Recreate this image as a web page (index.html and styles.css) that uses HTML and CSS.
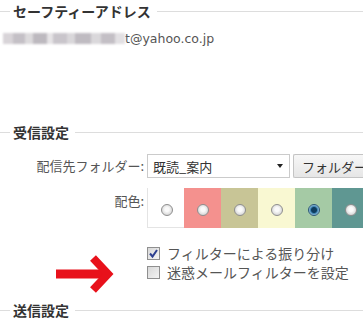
FILE: index.html
```html
<!DOCTYPE html>
<html>
  <head>
    <meta charset="utf-8"/>
    <title>受信設定</title>
    <link rel="stylesheet" href="styles.css">
  </head>
  <body>
    <div class="page">
      <div class="legend legend-safety"><span>セーフティーアドレス</span></div>
      <p class="email"><span class="masked"></span>t@yahoo.co.jp</p>

      <div class="legend legend-recv"><span>受信設定</span></div>
      <div class="form">
        <div class="label label-mid">配信先フォルダー:</div>
        <div class="folder-field">
          <div class="select"><span>既読_案内</span><span class="caret"></span></div>
          <button class="btn">フォルダー</button>
        </div>

        <div class="label label-top">配色:</div>
        <div class="swatches">
          <span class="swatch sw-white"><i class="radio"></i></span>
          <span class="swatch sw-pink"><i class="radio"></i></span>
          <span class="swatch sw-khaki"><i class="radio"></i></span>
          <span class="swatch sw-yellow"><i class="radio"></i></span>
          <span class="swatch sw-green"><i class="radio radio-on"></i></span>
          <span class="swatch sw-teal"><i class="radio"></i></span>
        </div>

        <div></div>
        <div class="checks">
          <div class="check-row">
            <span class="checkbox">
              <svg width="11" height="11" viewBox="0 0 11 11"><path d="M2 5.5 L4.5 8.5 L9 2" fill="none" stroke="#2d3f8f" stroke-width="2"/></svg>
            </span>
            フィルターによる振り分け
          </div>
          <div class="check-row">
            <span class="checkbox"></span>
            迷惑メールフィルターを設定
          </div>
        </div>
      </div>

      <svg class="arrow" width="64" height="44" viewBox="0 0 64 44">
        <line x1="2" y1="21" x2="52" y2="21" stroke="#e8111b" stroke-width="9"/>
        <polyline points="39,5 54,21 39,37" fill="none" stroke="#e8111b" stroke-width="8"/>
      </svg>

      <div class="legend legend-send"><span>送信設定</span></div>
    </div>
  </body>
</html>
```

FILE: styles.css
```css
* {
  margin: 0;
  padding: 0;
  box-sizing: border-box;
}

html {
  font-size: 13px;
  font-family: 'Noto Sans CJK JP', 'DejaVu Sans', sans-serif;
  color: #555;
}

body {
  width: 363px;
  height: 323px;
  overflow: hidden;
  background: #fff;
}

.page {
  position: relative;
}

.legend {
  display: flex;
  align-items: center;
  height: 20px;
  font-size: 14px;
  font-weight: bold;
  color: #333;
}

.legend::before,
.legend::after {
  content: '';
  height: 1px;
  background: #ddd;
}

.legend::before {
  width: 10px;
}

.legend::after {
  flex: 1;
}

.legend span {
  margin: 0 6px 0 3px;
  line-height: 20px;
}

.legend-safety {
  margin-top: 1px;
}

.email {
  margin: 8px 0 0 3px;
  line-height: 20px;
  font-family: 'DejaVu Sans', sans-serif;
  font-size: 12.5px;
  color: #555;
}

.masked {
  display: inline-block;
  width: 122px;
  height: 11px;
  vertical-align: -1px;
  background: linear-gradient(90deg,
    #d8d4d8 0 10px, #c4c0c6 10px 22px, #dcdadc 22px 30px, #bdb9bf 30px 44px,
    #e6e4e6 44px 50px, #c9c5cb 50px 64px, #d9d7da 64px 72px, #bfbbc1 72px 88px,
    #dad8db 88px 98px, #c3bfc5 98px 112px, #e2e0e3 112px 122px);
  filter: blur(1px);
}

.legend-recv {
  margin-top: 73px;
}

.form {
  display: grid;
  grid-template-columns: 147px 1fr;
  row-gap: 10px;
  margin-top: 12px;
}

.label {
  text-align: right;
  padding-right: 3px;
  line-height: 20px;
  white-space: nowrap;
}

.label-mid {
  align-self: center;
}

.label-top {
  align-self: start;
  padding-top: 3px;
}

.folder-field {
  display: flex;
  gap: 3px;
}

.select {
  display: flex;
  align-items: center;
  justify-content: space-between;
  flex: none;
  width: 143px;
  height: 24px;
  padding: 0 5px;
  border: 1px solid #cbcbcb;
  background: #fff;
  color: #333;
}

.caret {
  width: 0;
  height: 0;
  border-left: 3.5px solid transparent;
  border-right: 3.5px solid transparent;
  border-top: 4px solid #222;
  margin-right: 1px;
}

.btn {
  flex: none;
  width: 90px;
  height: 24px;
  padding-left: 8px;
  text-align: left;
  font: inherit;
  color: #333;
  border: 1px solid #c4c4c4;
  border-right: none;
  border-radius: 2px 0 0 2px;
  background: linear-gradient(#f7f7f7, #e6e6e6);
}

.swatches {
  display: flex;
  height: 40px;
}

.swatch {
  flex: none;
  display: flex;
  align-items: center;
  justify-content: center;
  width: 37px;
  height: 40px;
  padding-top: 4px;
}

.sw-white {
  background: #fff;
  border-left: 1px solid #e4e4e4;
  border-bottom: 1px solid #e4e4e4;
  padding-left: 1px;
}

.sw-pink { background: #f4918e; }
.sw-khaki { background: #c8c596; }
.sw-yellow { background: #f9f8d2; }
.sw-green { background: #a5caa5; }
.sw-teal { background: #5f9792; }

.radio {
  display: block;
  width: 12px;
  height: 12px;
  border-radius: 50%;
  border: 1px solid #8e8e8e;
  background: radial-gradient(circle at 50% 45%, #fafafa 0 2px, #dcdcdc 5px);
}

.radio-on {
  border-color: #2b5776;
  background: radial-gradient(circle, #0e3c5e 0 2.5px, #3d84b3 3.5px, #b9d4e8 5.5px);
}

.checks {
  margin-top: 6px;
}

.check-row {
  display: flex;
  align-items: center;
  gap: 7px;
  font-size: 14px;
  line-height: 19px;
  color: #555;
  white-space: nowrap;
}

.checkbox {
  display: flex;
  align-items: center;
  justify-content: center;
  flex: none;
  width: 13px;
  height: 13px;
  border: 1px solid #8f8f8f;
  background: linear-gradient(135deg, #d8d8d8, #f4f4f4);
}

.arrow {
  position: absolute;
  left: 54px;
  top: 252px;
}

.legend-send {
  margin-top: 18px;
}
```
